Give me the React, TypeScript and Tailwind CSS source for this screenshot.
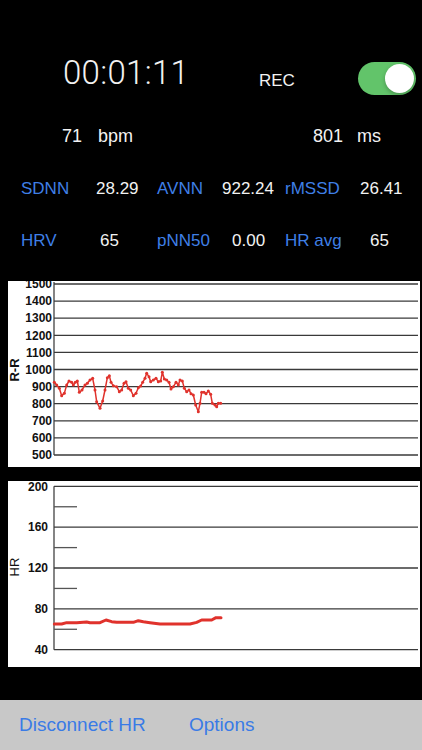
const rrPoints: [number, number][] = [
  [163, 322], [170, 330], [178, 340], [185, 362], [193, 355], [200, 330], [207, 318], [215, 322],
  [220, 330], [226, 322], [232, 318], [238, 352], [246, 345], [255, 330], [262, 325], [270, 315],
  [278, 310], [285, 345], [290, 380], [300, 400], [308, 378], [315, 345], [322, 308], [328, 302],
  [333, 322], [340, 332], [350, 335], [358, 350], [365, 345], [372, 325], [378, 320], [385, 340],
  [392, 345], [400, 362], [408, 355], [415, 338], [422, 333], [428, 322], [435, 310], [440, 295],
  [447, 305], [452, 320], [460, 315], [468, 310], [475, 320], [482, 318], [487, 292], [493, 312],
  [500, 315], [507, 322], [513, 342], [520, 335], [528, 322], [535, 330], [540, 315], [547, 318],
  [553, 340], [560, 350], [567, 345], [573, 356], [580, 360], [587, 390], [595, 410], [600, 385],
  [605, 352], [612, 352], [618, 356], [625, 348], [632, 358], [637, 385], [645, 390], [650, 395],
  [655, 385], [662, 385],
];

const hrPoints: [number, number][] = [
  [163, 462], [185, 462], [200, 458], [230, 458], [260, 456], [270, 458], [300, 458], [318, 450],
  [335, 455], [350, 457], [400, 457], [415, 452], [430, 455], [450, 458], [480, 462], [520, 462],
  [570, 462], [590, 457], [605, 450], [635, 450], [648, 443], [663, 443],
];

const rr = rrPoints.map(([x, y]) => [x / 3, 275 + y / 3] as [number, number]);
const hr = hrPoints.map(([x, y]) => [x / 3, 470 + y / 3] as [number, number]);

const rrY = (v: number) => 455 - (v - 500) * 0.171;
const hrY = (v: number) => 649.7 - (v - 40) * 1.021;

const axisFont = "'Liberation Sans', Arial, sans-serif";

function RRChart() {
  const ticks = [1500, 1400, 1300, 1200, 1100, 1000, 900, 800, 700, 600, 500];
  return (
    <svg width="412" height="186" viewBox="8 281 412 186" className="block">
      <line x1="54" y1="282" x2="54" y2={rrY(500)} stroke="#333" strokeWidth="1.2" />
      {ticks.map((t) => (
        <g key={t}>
          <line x1="54" y1={rrY(t)} x2="418" y2={rrY(t)} stroke="#3a3a3a" strokeWidth="1.3" />
          <text
            x="52"
            y={rrY(t) + 4.2}
            textAnchor="end"
            fontSize="12"
            fontWeight="bold"
            fontFamily={axisFont}
            fill="#111"
          >
            {t}
          </text>
        </g>
      ))}
      <text
        transform="translate(19,370) rotate(-90)"
        textAnchor="middle"
        fontSize="13"
        fontWeight="bold"
        fontFamily={axisFont}
        fill="#111"
      >
        R-R
      </text>
      <polyline
        points={rr.map((p) => p.join(',')).join(' ')}
        fill="none"
        stroke="#e0322c"
        strokeWidth="1.5"
        strokeLinejoin="round"
      />
      {rr.map(([x, y], i) => (
        <circle key={i} cx={x} cy={y} r="1.5" fill="#e0322c" />
      ))}
    </svg>
  );
}

function HRChart() {
  const major = [200, 160, 120, 80, 40];
  const minor = [180, 140, 100, 60];
  return (
    <svg width="412" height="186" viewBox="8 481 412 186" className="block">
      <line x1="54" y1={hrY(200)} x2="54" y2={hrY(40)} stroke="#333" strokeWidth="1.2" />
      {major.map((t) => (
        <g key={t}>
          <line x1="54" y1={hrY(t)} x2="418" y2={hrY(t)} stroke="#3a3a3a" strokeWidth="1.3" />
          <text
            x="48"
            y={hrY(t) + 4.2}
            textAnchor="end"
            fontSize="12"
            fontWeight="bold"
            fontFamily={axisFont}
            fill="#111"
          >
            {t}
          </text>
        </g>
      ))}
      {minor.map((t) => (
        <line key={t} x1="54" y1={hrY(t)} x2="77" y2={hrY(t)} stroke="#555" strokeWidth="1.3" />
      ))}
      <text
        transform="translate(19,567) rotate(-90)"
        textAnchor="middle"
        fontSize="13"
        fontFamily={axisFont}
        fill="#111"
      >
        HR
      </text>
      <polyline
        points={hr.map((p) => p.join(',')).join(' ')}
        fill="none"
        stroke="#e0322c"
        strokeWidth="3"
        strokeLinejoin="round"
        strokeLinecap="round"
      />
    </svg>
  );
}

function Toggle() {
  return (
    <div className="w-[58px] h-[33px] rounded-full bg-[#62c46a] flex items-center justify-end pr-[2px]">
      <div className="w-[29px] h-[29px] rounded-full bg-white shadow-[0_2px_4px_rgba(0,0,0,0.25)]" />
    </div>
  );
}

export default function App() {
  return (
    <div className="w-[422px] h-[750px] bg-black flex flex-col text-[#f2f2f2] font-['Liberation_Sans',Arial,sans-serif]">
      <div className="flex items-start mt-[53px] h-[42px]">
        <div className="ml-[63px] w-[196px] text-[33px] leading-[40px] font-light font-['Roboto',sans-serif] tracking-[0.3px]">
          00:01:11
        </div>
        <div className="w-[99px] mt-[18px] text-[17px] leading-[20px]">REC</div>
        <div className="mt-[9px]">
          <Toggle />
        </div>
      </div>

      <div className="flex mt-[30px] text-[18px] leading-[22px]">
        <span className="ml-[62px] w-[36px]">71</span>
        <span className="w-[215px]">bpm</span>
        <span className="w-[44px]">801</span>
        <span>ms</span>
      </div>

      <div className="flex mt-[32px] text-[17px] leading-[20px] pl-[21px]">
        <span className="w-[75px] text-[#3f7fe6]">SDNN</span>
        <span className="w-[61px]">28.29</span>
        <span className="w-[65px] text-[#3f7fe6]">AVNN</span>
        <span className="w-[63px]">922.24</span>
        <span className="w-[75px] text-[#3f7fe6]">rMSSD</span>
        <span>26.41</span>
      </div>

      <div className="flex mt-[32px] text-[17px] leading-[20px] pl-[21px]">
        <span className="w-[79px] text-[#3f7fe6]">HRV</span>
        <span className="w-[57px]">65</span>
        <span className="w-[75px] text-[#3f7fe6]">pNN50</span>
        <span className="w-[53px]">0.00</span>
        <span className="w-[85px] text-[#3f7fe6]">HR avg</span>
        <span>65</span>
      </div>

      <div className="mt-[30px] ml-[8px] w-[412px] h-[186px] bg-white overflow-hidden">
        <RRChart />
      </div>

      <div className="mt-[14px] ml-[8px] w-[412px] h-[186px] bg-white overflow-hidden">
        <HRChart />
      </div>

      <div className="flex-1" />

      <div className="h-[50px] bg-[#c8c8c8] flex items-start pt-[14px] text-[19px] leading-[22px] text-[#3a7be6]">
        <span className="ml-[19px] w-[170px]">Disconnect HR</span>
        <span>Options</span>
      </div>
    </div>
  );
}
